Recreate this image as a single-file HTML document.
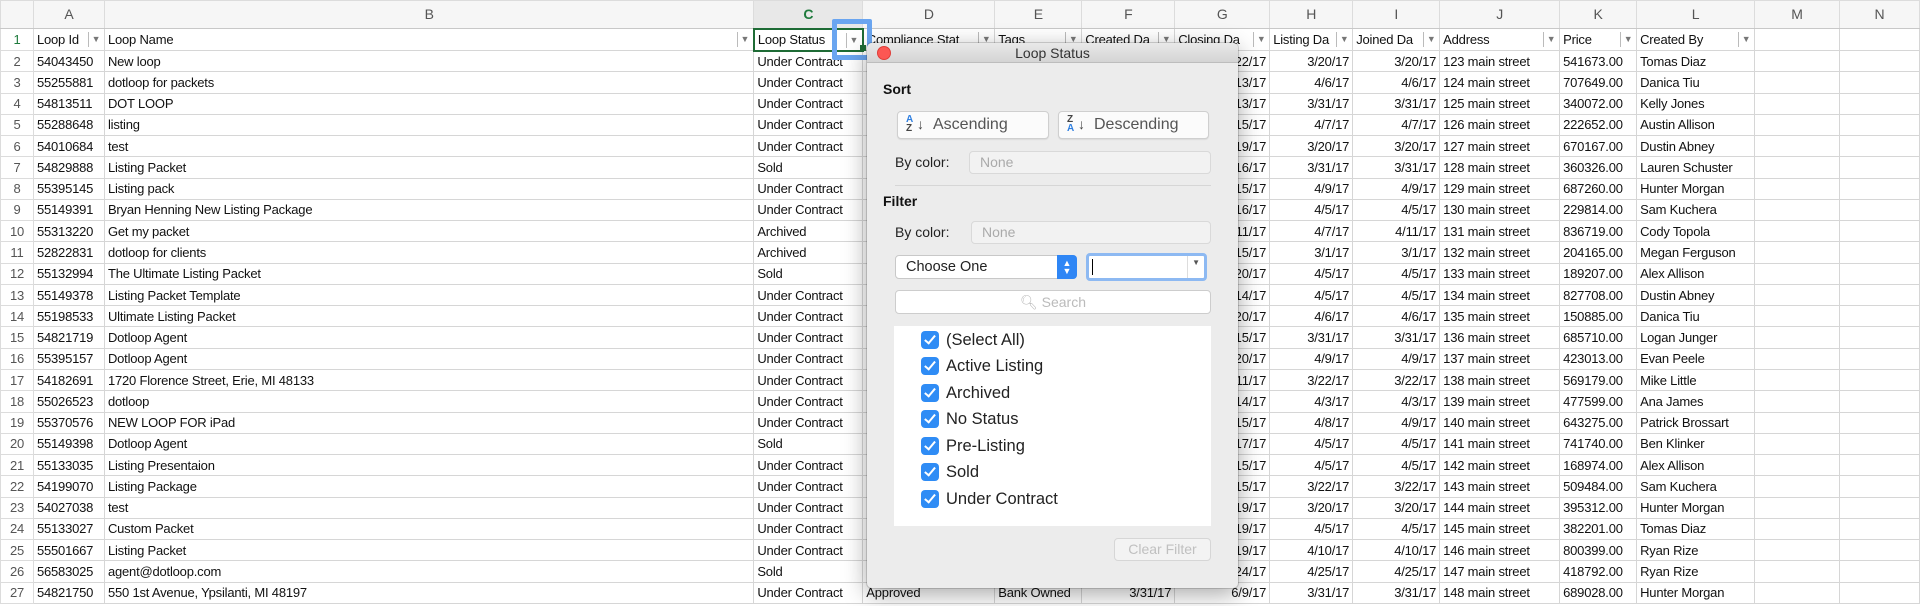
<!DOCTYPE html>
<html><head><meta charset="utf-8"><style>
*{box-sizing:border-box;margin:0;padding:0}
body{width:1920px;height:606px;overflow:hidden;background:#fff;font-family:"Liberation Sans",sans-serif;font-size:13px;letter-spacing:-0.2px;color:#111;position:relative}
table{border-collapse:collapse;table-layout:fixed;position:absolute;left:0;top:0}
td{border:1px solid #d6d6d6;height:21.28px;padding:0 3px;white-space:nowrap;overflow:hidden;line-height:19px}
tr.h td{height:28px;background:#f6f6f6;color:#555;text-align:center;font-size:14px;border-color:#dcdcdc;border-bottom:1px solid #c8c8c8}
tr.r1 td{height:22px}
td.n{background:#fff;color:#555;text-align:center;padding:0;border-color:#dcdcdc}
.r{text-align:right}
.f{position:relative;padding-right:18px}
.f i{position:absolute;right:1px;top:3px;width:15px;height:15px;border-left:1px solid #bbb;font-style:normal;color:#777;font-size:9px;line-height:15px;text-align:center}
#dlg{position:absolute;left:867px;top:43px;width:371px;height:545px;background:#ececec;border-radius:5px;box-shadow:0 6px 24px rgba(0,0,0,.35),0 0 0 1px rgba(0,0,0,.15);font-family:"Liberation Sans",sans-serif;letter-spacing:0;overflow:hidden}
#tb{height:20px;background:linear-gradient(#e9e9e9,#d4d4d4);border-bottom:1px solid #bdbdbd;text-align:center;font-size:14px;line-height:20px;color:#333}
#cl{position:absolute;left:10px;top:3px;width:14px;height:14px;border-radius:50%;background:#fc5753;border:1px solid #df3d38}
.a{position:absolute}
.lbl{font-size:14px;color:#222}
.b{font-weight:bold;font-size:14px;color:#111}
.btn{background:#fbfbfb;border:1px solid #cfcfcf;border-radius:4px;box-shadow:0 1px 1px rgba(0,0,0,.08);font-size:16px;color:#555}
.sel{background:#f2f2f2;border:1px solid #d9d9d9;border-radius:4px;font-size:14px;color:#aaa;padding-left:10px;line-height:21px}
.ck{position:absolute;left:27px;width:18px;height:18px;border-radius:4px;background:#2f8cf5}
.ck:after{content:"";position:absolute;left:6px;top:2px;width:4px;height:9px;border:solid #fff;border-width:0 2px 2px 0;transform:rotate(40deg)}
.it{position:absolute;left:52px;font-size:16.5px;color:#222;line-height:20px}
</style></head><body>
<table>
<colgroup><col style="width:33px"><col style="width:71px"><col style="width:650px"><col style="width:109px"><col style="width:132px"><col style="width:87px"><col style="width:93px"><col style="width:95px"><col style="width:83px"><col style="width:87px"><col style="width:120px"><col style="width:77px"><col style="width:118px"><col style="width:85px"><col style="width:80px"></colgroup>
<tr class="h"><td class="n" style="background:#f6f6f6"></td><td>A</td><td>B</td><td style="color:#1e7a3c;font-weight:bold;background:#e8e8e8">C</td><td>D</td><td>E</td><td>F</td><td>G</td><td>H</td><td>I</td><td>J</td><td>K</td><td>L</td><td>M</td><td>N</td></tr>
<tr class="r1"><td class="n" style="color:#1e7a3c">1</td><td class="f">Loop Id<i>▼</i></td><td class="f">Loop Name<i>▼</i></td><td class="f" style="border:2px solid #1e6b35">Loop Status<i>▼</i></td><td class="f">Compliance Stat<i>▼</i></td><td class="f">Tags<i>▼</i></td><td class="f">Created Da<i>▼</i></td><td class="f">Closing Da<i>▼</i></td><td class="f">Listing Da<i>▼</i></td><td class="f">Joined Da<i>▼</i></td><td class="f">Address<i>▼</i></td><td class="f">Price<i>▼</i></td><td class="f">Created By<i>▼</i></td><td></td><td></td></tr>
<tr><td class="n">2</td><td>54043450</td><td>New loop</td><td>Under Contract</td><td></td><td></td><td></td><td class="r">3/22/17</td><td class="r">3/20/17</td><td class="r">3/20/17</td><td>123 main street</td><td>541673.00</td><td>Tomas Diaz</td><td></td><td></td></tr>
<tr><td class="n">3</td><td>55255881</td><td>dotloop for packets</td><td>Under Contract</td><td></td><td></td><td></td><td class="r">4/13/17</td><td class="r">4/6/17</td><td class="r">4/6/17</td><td>124 main street</td><td>707649.00</td><td>Danica Tiu</td><td></td><td></td></tr>
<tr><td class="n">4</td><td>54813511</td><td>DOT LOOP</td><td>Under Contract</td><td></td><td></td><td></td><td class="r">4/13/17</td><td class="r">3/31/17</td><td class="r">3/31/17</td><td>125 main street</td><td>340072.00</td><td>Kelly Jones</td><td></td><td></td></tr>
<tr><td class="n">5</td><td>55288648</td><td>listing</td><td>Under Contract</td><td></td><td></td><td></td><td class="r">4/15/17</td><td class="r">4/7/17</td><td class="r">4/7/17</td><td>126 main street</td><td>222652.00</td><td>Austin Allison</td><td></td><td></td></tr>
<tr><td class="n">6</td><td>54010684</td><td>test</td><td>Under Contract</td><td></td><td></td><td></td><td class="r">4/19/17</td><td class="r">3/20/17</td><td class="r">3/20/17</td><td>127 main street</td><td>670167.00</td><td>Dustin Abney</td><td></td><td></td></tr>
<tr><td class="n">7</td><td>54829888</td><td>Listing Packet</td><td>Sold</td><td></td><td></td><td></td><td class="r">4/16/17</td><td class="r">3/31/17</td><td class="r">3/31/17</td><td>128 main street</td><td>360326.00</td><td>Lauren Schuster</td><td></td><td></td></tr>
<tr><td class="n">8</td><td>55395145</td><td>Listing pack</td><td>Under Contract</td><td></td><td></td><td></td><td class="r">4/15/17</td><td class="r">4/9/17</td><td class="r">4/9/17</td><td>129 main street</td><td>687260.00</td><td>Hunter Morgan</td><td></td><td></td></tr>
<tr><td class="n">9</td><td>55149391</td><td>Bryan Henning New Listing Package</td><td>Under Contract</td><td></td><td></td><td></td><td class="r">4/16/17</td><td class="r">4/5/17</td><td class="r">4/5/17</td><td>130 main street</td><td>229814.00</td><td>Sam Kuchera</td><td></td><td></td></tr>
<tr><td class="n">10</td><td>55313220</td><td>Get my packet</td><td>Archived</td><td></td><td></td><td></td><td class="r">4/11/17</td><td class="r">4/7/17</td><td class="r">4/11/17</td><td>131 main street</td><td>836719.00</td><td>Cody Topola</td><td></td><td></td></tr>
<tr><td class="n">11</td><td>52822831</td><td>dotloop for clients</td><td>Archived</td><td></td><td></td><td></td><td class="r">4/15/17</td><td class="r">3/1/17</td><td class="r">3/1/17</td><td>132 main street</td><td>204165.00</td><td>Megan Ferguson</td><td></td><td></td></tr>
<tr><td class="n">12</td><td>55132994</td><td>The Ultimate Listing Packet</td><td>Sold</td><td></td><td></td><td></td><td class="r">4/20/17</td><td class="r">4/5/17</td><td class="r">4/5/17</td><td>133 main street</td><td>189207.00</td><td>Alex Allison</td><td></td><td></td></tr>
<tr><td class="n">13</td><td>55149378</td><td>Listing Packet Template</td><td>Under Contract</td><td></td><td></td><td></td><td class="r">4/14/17</td><td class="r">4/5/17</td><td class="r">4/5/17</td><td>134 main street</td><td>827708.00</td><td>Dustin Abney</td><td></td><td></td></tr>
<tr><td class="n">14</td><td>55198533</td><td>Ultimate Listing Packet</td><td>Under Contract</td><td></td><td></td><td></td><td class="r">4/20/17</td><td class="r">4/6/17</td><td class="r">4/6/17</td><td>135 main street</td><td>150885.00</td><td>Danica Tiu</td><td></td><td></td></tr>
<tr><td class="n">15</td><td>54821719</td><td>Dotloop Agent</td><td>Under Contract</td><td></td><td></td><td></td><td class="r">4/15/17</td><td class="r">3/31/17</td><td class="r">3/31/17</td><td>136 main street</td><td>685710.00</td><td>Logan Junger</td><td></td><td></td></tr>
<tr><td class="n">16</td><td>55395157</td><td>Dotloop Agent</td><td>Under Contract</td><td></td><td></td><td></td><td class="r">4/20/17</td><td class="r">4/9/17</td><td class="r">4/9/17</td><td>137 main street</td><td>423013.00</td><td>Evan Peele</td><td></td><td></td></tr>
<tr><td class="n">17</td><td>54182691</td><td>1720 Florence Street, Erie, MI 48133</td><td>Under Contract</td><td></td><td></td><td></td><td class="r">4/11/17</td><td class="r">3/22/17</td><td class="r">3/22/17</td><td>138 main street</td><td>569179.00</td><td>Mike Little</td><td></td><td></td></tr>
<tr><td class="n">18</td><td>55026523</td><td>dotloop</td><td>Under Contract</td><td></td><td></td><td></td><td class="r">4/14/17</td><td class="r">4/3/17</td><td class="r">4/3/17</td><td>139 main street</td><td>477599.00</td><td>Ana James</td><td></td><td></td></tr>
<tr><td class="n">19</td><td>55370576</td><td>NEW LOOP FOR iPad</td><td>Under Contract</td><td></td><td></td><td></td><td class="r">4/15/17</td><td class="r">4/8/17</td><td class="r">4/9/17</td><td>140 main street</td><td>643275.00</td><td>Patrick Brossart</td><td></td><td></td></tr>
<tr><td class="n">20</td><td>55149398</td><td>Dotloop Agent</td><td>Sold</td><td></td><td></td><td></td><td class="r">4/17/17</td><td class="r">4/5/17</td><td class="r">4/5/17</td><td>141 main street</td><td>741740.00</td><td>Ben Klinker</td><td></td><td></td></tr>
<tr><td class="n">21</td><td>55133035</td><td>Listing Presentaion</td><td>Under Contract</td><td></td><td></td><td></td><td class="r">4/15/17</td><td class="r">4/5/17</td><td class="r">4/5/17</td><td>142 main street</td><td>168974.00</td><td>Alex Allison</td><td></td><td></td></tr>
<tr><td class="n">22</td><td>54199070</td><td>Listing Package</td><td>Under Contract</td><td></td><td></td><td></td><td class="r">4/15/17</td><td class="r">3/22/17</td><td class="r">3/22/17</td><td>143 main street</td><td>509484.00</td><td>Sam Kuchera</td><td></td><td></td></tr>
<tr><td class="n">23</td><td>54027038</td><td>test</td><td>Under Contract</td><td></td><td></td><td></td><td class="r">4/19/17</td><td class="r">3/20/17</td><td class="r">3/20/17</td><td>144 main street</td><td>395312.00</td><td>Hunter Morgan</td><td></td><td></td></tr>
<tr><td class="n">24</td><td>55133027</td><td>Custom Packet</td><td>Under Contract</td><td></td><td></td><td></td><td class="r">4/19/17</td><td class="r">4/5/17</td><td class="r">4/5/17</td><td>145 main street</td><td>382201.00</td><td>Tomas Diaz</td><td></td><td></td></tr>
<tr><td class="n">25</td><td>55501667</td><td>Listing Packet</td><td>Under Contract</td><td></td><td></td><td></td><td class="r">4/19/17</td><td class="r">4/10/17</td><td class="r">4/10/17</td><td>146 main street</td><td>800399.00</td><td>Ryan Rize</td><td></td><td></td></tr>
<tr><td class="n">26</td><td>56583025</td><td>agent@dotloop.com</td><td>Sold</td><td></td><td></td><td></td><td class="r">4/24/17</td><td class="r">4/25/17</td><td class="r">4/25/17</td><td>147 main street</td><td>418792.00</td><td>Ryan Rize</td><td></td><td></td></tr>
<tr><td class="n">27</td><td>54821750</td><td>550 1st Avenue, Ypsilanti, MI 48197</td><td>Under Contract</td><td>Approved</td><td>Bank Owned</td><td class="r">3/31/17</td><td class="r">6/9/17</td><td class="r">3/31/17</td><td class="r">3/31/17</td><td>148 main street</td><td>689028.00</td><td>Hunter Morgan</td><td></td><td></td></tr>
</table>
<div class="a" style="left:832px;top:19px;width:40px;height:41px;border:5px solid #6aa5f0;border-radius:2px"></div>
<div class="a" style="left:860px;top:45px;width:6px;height:6px;background:#1e6b35"></div>
<div id="dlg">
<div id="tb">Loop Status</div><div id="cl"></div>
<div class="a b" style="left:16px;top:38px">Sort</div>
<div class="a btn" style="left:30px;top:68px;width:152px;height:28px"><span class="a" style="left:8px;top:3px;font-size:10px;line-height:9px;color:#2f7fe0;font-weight:bold">A<br><span style="color:#444">Z</span></span><span class="a" style="left:19px;top:4px;font-size:14px;color:#444">↓</span><span class="a" style="left:35px;top:4px">Ascending</span></div>
<div class="a btn" style="left:191px;top:68px;width:151px;height:28px"><span class="a" style="left:8px;top:3px;font-size:10px;line-height:9px;color:#444;font-weight:bold">Z<br><span style="color:#2f7fe0">A</span></span><span class="a" style="left:19px;top:4px;font-size:14px;color:#444">↓</span><span class="a" style="left:35px;top:4px">Descending</span></div>
<div class="a lbl" style="left:28px;top:111px">By color:</div>
<div class="a sel" style="left:102px;top:108px;width:242px;height:23px">None</div>
<div class="a" style="left:28px;top:142px;width:316px;height:1px;background:#d6d6d6"></div>
<div class="a b" style="left:16px;top:150px">Filter</div>
<div class="a lbl" style="left:28px;top:181px">By color:</div>
<div class="a sel" style="left:104px;top:178px;width:240px;height:23px">None</div>
<div class="a" style="left:28px;top:212px;width:182px;height:24px;background:#fff;border:1px solid #c8c8c8;border-radius:4px;font-size:14.5px;color:#222;line-height:22px;padding-left:10px">Choose One<div class="a" style="right:-1px;top:-1px;width:20px;height:24px;background:#2f86f5;border-radius:0 4px 4px 0;color:#fff;font-size:9px;line-height:8px;text-align:center;padding-top:4px">▲<br>▼</div></div>
<div class="a" style="left:219px;top:210px;width:121px;height:28px;border:3px solid #8db9f2;border-radius:4px;background:#fff"><div class="a" style="left:3px;top:3px;width:1px;height:16px;background:#000"></div><div class="a" style="right:16px;top:0;width:1px;height:22px;background:#ddd"></div><div class="a" style="right:4px;top:2px;font-size:8px;color:#555">▼</div></div>
<div class="a" style="left:28px;top:247px;width:316px;height:24px;background:#fff;border:1px solid #cdcdcd;border-radius:4px;text-align:center;font-size:14px;color:#bbb;line-height:22px">&#x1F50D;&#xFE0E; Search</div>
<div class="a" style="left:27px;top:283px;width:317px;height:200px;background:#fff">
<div class="ck" style="top:5px"></div><div class="it" style="top:4px">(Select All)</div>
<div class="ck" style="top:31px"></div><div class="it" style="top:30px">Active Listing</div>
<div class="ck" style="top:58px"></div><div class="it" style="top:57px">Archived</div>
<div class="ck" style="top:84px"></div><div class="it" style="top:83px">No Status</div>
<div class="ck" style="top:111px"></div><div class="it" style="top:110px">Pre-Listing</div>
<div class="ck" style="top:137px"></div><div class="it" style="top:136px">Sold</div>
<div class="ck" style="top:164px"></div><div class="it" style="top:163px">Under Contract</div>
</div>
<div class="a" style="left:247px;top:495px;width:97px;height:23px;border:1px solid #d6d6d6;border-radius:4px;background:#f3f3f3;color:#c0c0c0;font-size:14px;text-align:center;line-height:21px">Clear Filter</div>
</div>
</body></html>
